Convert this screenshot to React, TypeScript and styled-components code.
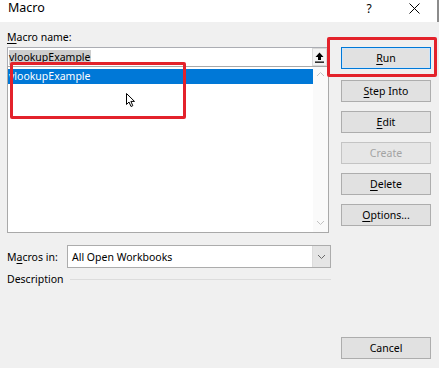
import React from 'react';
import styled, { createGlobalStyle } from 'styled-components';

const GlobalStyle = createGlobalStyle`
    html, body {
        margin: 0;
        padding: 0;
        background: #f0f0f0;
    }
    body {
        font-family: 'Noto Sans', 'Open Sans', sans-serif;
        font-size: 10.5px;
        color: #000;
    }
`;

const Window = styled.div`
    position: relative;
    width: 439px;
    height: 368px;
    display: flex;
    flex-direction: column;
    background: #f0f0f0;
    overflow: hidden;
`;

const TitleBar = styled.div`
    height: 22px;
    flex: none;
    display: flex;
    align-items: flex-start;
    background: #ffffff;
    border-right: 2px solid #8c8c8c;
    box-sizing: border-box;
`;

const Title = styled.div`
    flex: 1;
    padding: 0 0 0 8px;
    font-size: 12.5px;
    line-height: 16px;
`;

const TitleButton = styled.div<{ $w: number }>`
    width: ${(p) => p.$w}px;
    height: 16px;
    display: flex;
    align-items: center;
    justify-content: center;
    font-size: 12px;
`;

const Body = styled.div`
    flex: 1;
    display: flex;
    gap: 11px;
    padding: 8px 7px 9px 7px;
`;

const LeftCol = styled.div`
    width: 323px;
    display: flex;
    flex-direction: column;
`;

const Label = styled.div`
    line-height: 15px;
    height: 15px;
    margin-bottom: 2px;
    white-space: nowrap;
`;

const Key = styled.span`
    text-decoration: underline;
    text-underline-offset: 2px;
`;

const NameInput = styled.div`
    height: 19px;
    box-sizing: border-box;
    border: 1px solid #abadb3;
    border-bottom: none;
    background: #fff;
    display: flex;
    align-items: center;
    padding-left: 1px;
    margin-right: 1px;
`;

const InputText = styled.div`
    flex: 1;
`;

const SelectedText = styled.span`
    background: #cdcdcd;
    line-height: 15px;
    display: inline-block;
`;

const UploadButton = styled.div`
    width: 13px;
    height: 16px;
    margin-right: 1px;
    border: 1px solid #dadada;
    background: #f4f4f4;
    display: flex;
    align-items: center;
    justify-content: center;
`;

const List = styled.div`
    height: 167px;
    box-sizing: border-box;
    border: 1px solid #a9a9a9;
    background: #fff;
    display: flex;
    margin-right: 1px;
`;

const ListItems = styled.div`
    flex: 1;
    padding: 2px 0 0 0;
`;

const ListItem = styled.div<{ $active?: boolean }>`
    height: 15px;
    line-height: 15px;
    padding-left: 1px;
    background: ${(p) => (p.$active ? '#0078d7' : 'transparent')};
    color: ${(p) => (p.$active ? '#fff' : '#000')};
`;

const ScrollBar = styled.div`
    width: 15px;
    background: #fafafa;
    display: flex;
    flex-direction: column;
    justify-content: space-between;
    align-items: center;
    padding: 4px 0 6px 0;
`;

const ComboRow = styled.div`
    display: flex;
    align-items: center;
    margin-top: 12px;
    height: 23px;
`;

const ComboLabel = styled.div`
    width: 60px;
`;

const Combo = styled.div`
    flex: 1;
    height: 23px;
    box-sizing: border-box;
    border: 1px solid #acacac;
    background: #fff;
    display: flex;
    align-items: center;
    padding-left: 4px;
    margin-right: -1px;
`;

const ComboText = styled.div`
    flex: 1;
`;

const ComboArrow = styled.div`
    width: 17px;
    height: 21px;
    border-left: 1px solid #dcdcdc;
    background: #e5e5e5;
    display: flex;
    align-items: center;
    justify-content: center;
`;

const DescRow = styled.div`
    display: flex;
    align-items: center;
    gap: 6px;
    margin-top: 4px;
    margin-right: -1px;
`;

const DescLine = styled.div`
    flex: 1;
    height: 1px;
    background: #dcdcdc;
`;

const RightCol = styled.div`
    width: 90px;
    display: flex;
    flex-direction: column;
    padding-top: 17px;
`;

const Button = styled.div<{ $primary?: boolean; $disabled?: boolean; $gap?: number }>`
    height: 22px;
    box-sizing: border-box;
    margin-bottom: ${(p) => p.$gap ?? 9}px;
    border: 1px solid ${(p) => (p.$primary ? '#0078d7' : p.$disabled ? '#c4c4c4' : '#adadad')};
    background: ${(p) => (p.$disabled ? '#e6e6e6' : '#e1e1e1')};
    color: ${(p) => (p.$disabled ? '#a3a3a3' : '#000')};
    display: flex;
    align-items: center;
    justify-content: center;
    ${(p) => p.$primary && 'box-shadow: inset 0 0 0 1px #cfe5f8;'}
`;

const Spacer = styled.div`
    flex: 1;
`;

const RedBox = styled.div<{ $x: number; $y: number; $w: number; $h: number }>`
    position: absolute;
    left: ${(p) => p.$x}px;
    top: ${(p) => p.$y}px;
    width: ${(p) => p.$w}px;
    height: ${(p) => p.$h}px;
    box-sizing: border-box;
    border: 3px solid #e3222b;
    border-radius: 2px;
    pointer-events: none;
`;

const Cursor = styled.svg`
    position: absolute;
    left: 126px;
    top: 93px;
`;

const Chevron = ({ up, color }: { up?: boolean; color: string }) => (
    <svg width="9" height="6" viewBox="0 0 9 6">
        <path
            d={up ? 'M1 5 L4.5 1.5 L8 5' : 'M1 1 L4.5 4.5 L8 1'}
            fill="none"
            stroke={color}
            strokeWidth="1"
        />
    </svg>
);

const App = () => {
    return (
        <>
            <GlobalStyle />
            <Window>
                <TitleBar>
                    <Title>Macro</Title>
                    <TitleButton $w={44}>?</TitleButton>
                    <TitleButton $w={46}>
                        <svg width="11" height="11" viewBox="0 0 11 11">
                            <path d="M0.5 0.5 L10.5 10.5 M10.5 0.5 L0.5 10.5" stroke="#000" strokeWidth="1" />
                        </svg>
                    </TitleButton>
                </TitleBar>
                <Body>
                    <LeftCol>
                        <Label>
                            <Key>M</Key>acro name:
                        </Label>
                        <NameInput>
                            <InputText>
                                <SelectedText>vlookupExample</SelectedText>
                            </InputText>
                            <UploadButton>
                                <svg width="9" height="11" viewBox="0 0 9 11">
                                    <path d="M4.5 0.5 L8.5 5 L6 5 L6 8 L3 8 L3 5 L0.5 5 Z" fill="#000" />
                                    <rect x="0" y="9.5" width="9" height="1.3" fill="#000" />
                                </svg>
                            </UploadButton>
                        </NameInput>
                        <List>
                            <ListItems>
                                <ListItem $active>vlookupExample</ListItem>
                            </ListItems>
                            <ScrollBar>
                                <Chevron up color="#c2c2c2" />
                                <Chevron color="#c2c2c2" />
                            </ScrollBar>
                        </List>
                        <ComboRow>
                            <ComboLabel>
                                M<Key>a</Key>cros in:
                            </ComboLabel>
                            <Combo>
                                <ComboText>All Open Workbooks</ComboText>
                                <ComboArrow>
                                    <Chevron color="#6a6a6a" />
                                </ComboArrow>
                            </Combo>
                        </ComboRow>
                        <DescRow>
                            <div>Description</div>
                            <DescLine />
                        </DescRow>
                    </LeftCol>
                    <RightCol>
                        <Button $primary $gap={11}>
                            <span>
                                <Key>R</Key>un
                            </span>
                        </Button>
                        <Button>
                            <span>
                                <Key>S</Key>tep Into
                            </span>
                        </Button>
                        <Button>
                            <span>
                                <Key>E</Key>dit
                            </span>
                        </Button>
                        <Button $disabled>Create</Button>
                        <Button>
                            <span>
                                <Key>D</Key>elete
                            </span>
                        </Button>
                        <Button>
                            <span>
                                <Key>O</Key>ptions...
                            </span>
                        </Button>
                        <Spacer />
                        <Button $gap={0}>Cancel</Button>
                    </RightCol>
                </Body>
                <RedBox $x={327} $y={37} $w={110} $h={40} />
                <RedBox $x={10} $y={62} $w={176} $h={57} />
                <Cursor width="11" height="15" viewBox="0 0 11 15">
                    <path
                        d="M0.5 0.5 L0.5 11.5 L3 9 L5 13.5 L6.8 12.7 L4.9 8.4 L8.5 8.4 Z"
                        fill="#fff"
                        stroke="#000"
                        strokeWidth="1"
                        strokeLinejoin="miter"
                    />
                </Cursor>
            </Window>
        </>
    );
};

export default App;
